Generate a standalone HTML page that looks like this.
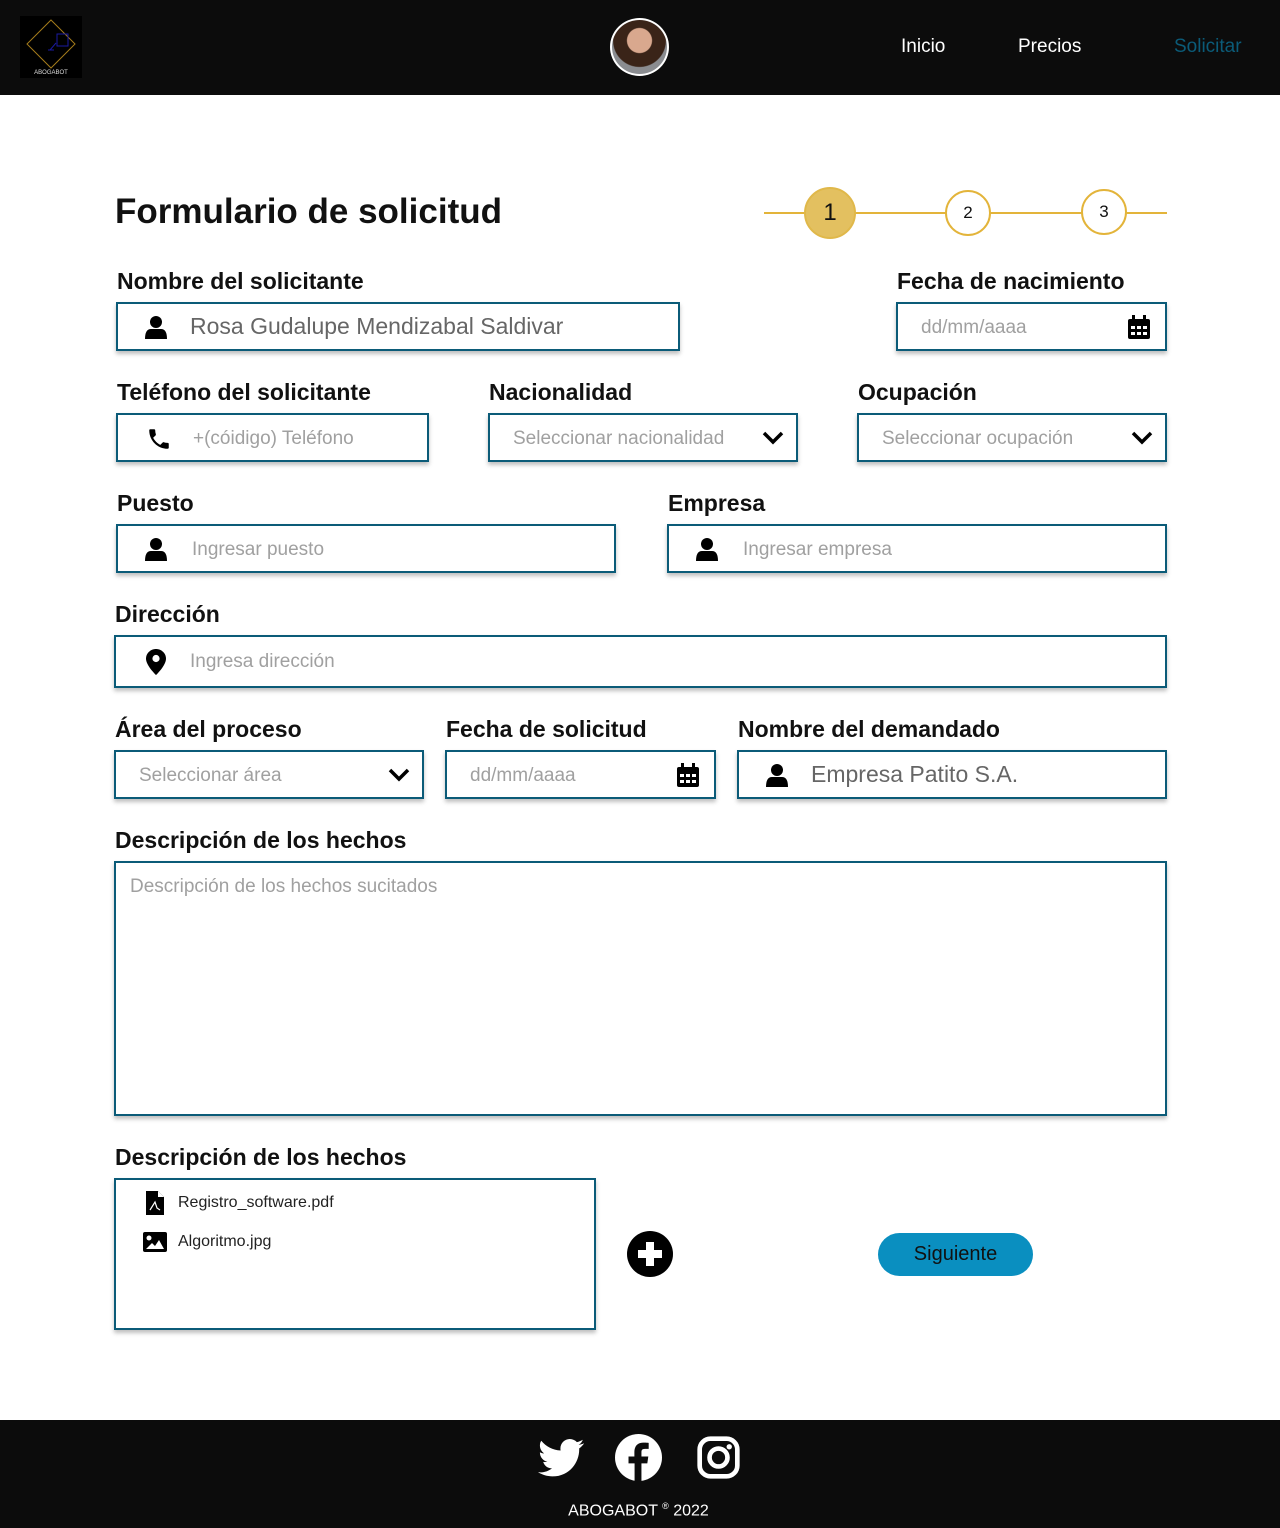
<!DOCTYPE html>
<html><head><meta charset="utf-8"><style>
*{box-sizing:border-box;margin:0;padding:0}
body{width:1280px;height:1528px;position:relative;background:#fff;font-family:"Liberation Sans",sans-serif;overflow:hidden}
.hdr{position:absolute;left:0;top:0;width:1280px;height:95px;background:#0c0c0c}
.ftr{position:absolute;left:0;top:1420px;width:1280px;height:108px;background:#0c0c0c}
.a{position:absolute}
.lbl{position:absolute;font-weight:bold;font-size:23px;color:#111;line-height:26px}
.f{position:absolute;border:2px solid #0b5b78;box-shadow:0 3px 4px rgba(0,0,0,.25);background:#fff}
.ph{position:absolute;font-size:19px;color:#a0a0a0;line-height:24px;white-space:nowrap}
.val{position:absolute;font-size:23px;color:#666;line-height:28px;white-space:nowrap}
.nav{position:absolute;top:36px;font-size:19px;color:#fff}
.st{position:absolute;border-radius:50%;border:2px solid #e3b43a;background:#fff;text-align:center;color:#111}
</style></head><body>
<div class="hdr">
  <div class="a" style="left:20px;top:16px;width:62px;height:62px;background:#000">
    <svg width="62" height="62"><polygon points="31,4 55,28 31,52 7,28" fill="none" stroke="#a57c1b" stroke-width="1"/><rect x="37" y="18" width="11" height="12" fill="none" stroke="#1a1aa0"/><path d="M30 34 L36 27 M28 34 h6" stroke="#1a1aa0" fill="none"/><text x="31" y="58" fill="#ddd" font-size="6" text-anchor="middle" font-family="Liberation Sans">ABOGABOT</text></svg>
  </div>
  <div class="a" style="left:610px;top:18px;width:59px;height:58px;border-radius:50%;border:2px solid #fff;background:radial-gradient(circle at 50% 38%,#d9a88e 0 28%,#3a2418 30% 60%,#8a8c90 62%)"></div>
  <div class="nav" style="left:901px">Inicio</div>
  <div class="nav" style="left:1018px">Precios</div>
  <div class="nav" style="left:1174px;color:#0b5b78">Solicitar</div>
</div>

<div class="a" style="left:115px;top:192px;font-size:35px;font-weight:bold;color:#111">Formulario de solicitud</div>
<div class="a" style="left:764px;top:212px;width:403px;height:2px;background:#e3b43a"></div>
<div class="st" style="left:804px;top:187px;width:52px;height:52px;background:#e3c060;border-color:#e0b84a;font-size:24px;line-height:48px">1</div>
<div class="st" style="left:945px;top:190px;width:46px;height:46px;font-size:17px;line-height:42px">2</div>
<div class="st" style="left:1081px;top:189px;width:46px;height:46px;font-size:17px;line-height:42px">3</div>

<svg width="0" height="0" style="position:absolute"><defs>
<g id="user"><circle cx="12" cy="7" r="6"/><path d="M1 24 Q1 14 7 14 H17 Q23 14 23 24 Z"/></g>
<g id="cal"><rect x="1" y="4" width="22" height="20" rx="2"/><rect x="5" y="0" width="3" height="6"/><rect x="16" y="0" width="3" height="6"/><g fill="#fff"><rect x="4" y="11" width="4" height="3"/><rect x="10" y="11" width="4" height="3"/><rect x="16" y="11" width="4" height="3"/><rect x="4" y="17" width="4" height="3"/><rect x="10" y="17" width="4" height="3"/><rect x="16" y="17" width="4" height="3"/></g></g>
<g id="chev"><path d="M2 4 L11 13 L20 4" fill="none" stroke="#000" stroke-width="3.5"/></g>
</defs></svg>

<div class="lbl" style="left:117px;top:268px">Nombre del solicitante</div>
<div class="f" style="left:116px;top:302px;width:564px;height:49px"><svg class="a" style="left:26px;top:11px" width="24" height="24"><use href="#user"/></svg><div class="val" style="left:72px;top:8px">Rosa Gudalupe Mendizabal Saldivar</div></div>
<div class="lbl" style="left:897px;top:268px">Fecha de nacimiento</div>
<div class="f" style="left:896px;top:302px;width:271px;height:49px"><div class="ph" style="left:23px;top:12px">dd/mm/aaaa</div><svg class="a" style="left:229px;top:11px" width="24" height="24"><use href="#cal"/></svg></div>

<div class="lbl" style="left:117px;top:379px">Teléfono del solicitante</div>
<div class="f" style="left:116px;top:413px;width:313px;height:49px"><svg class="a" style="left:28px;top:11px" width="26" height="26" viewBox="0 0 24 24"><path d="M6.6 10.8c1.4 2.8 3.8 5.1 6.6 6.6l2.2-2.2c.3-.3.7-.4 1-.2 1.1.4 2.3.6 3.6.6.6 0 1 .4 1 1V20c0 .6-.4 1-1 1C10.6 21 3 13.4 3 4c0-.6.4-1 1-1h3.5c.6 0 1 .4 1 1 0 1.3.2 2.5.6 3.6.1.3 0 .7-.2 1z"/></svg><div class="ph" style="left:75px;top:12px">+(cóidigo) Teléfono</div></div>
<div class="lbl" style="left:489px;top:379px">Nacionalidad</div>
<div class="f" style="left:488px;top:413px;width:310px;height:49px"><div class="ph" style="left:23px;top:12px">Seleccionar nacionalidad</div><svg class="a" style="left:272px;top:14px" width="22" height="18"><use href="#chev"/></svg></div>
<div class="lbl" style="left:858px;top:379px">Ocupación</div>
<div class="f" style="left:857px;top:413px;width:310px;height:49px"><div class="ph" style="left:23px;top:12px">Seleccionar ocupación</div><svg class="a" style="left:272px;top:14px" width="22" height="18"><use href="#chev"/></svg></div>

<div class="lbl" style="left:117px;top:490px">Puesto</div>
<div class="f" style="left:116px;top:524px;width:500px;height:49px"><svg class="a" style="left:26px;top:11px" width="24" height="24"><use href="#user"/></svg><div class="ph" style="left:74px;top:12px">Ingresar puesto</div></div>
<div class="lbl" style="left:668px;top:490px">Empresa</div>
<div class="f" style="left:667px;top:524px;width:500px;height:49px"><svg class="a" style="left:26px;top:11px" width="24" height="24"><use href="#user"/></svg><div class="ph" style="left:74px;top:12px">Ingresar empresa</div></div>

<div class="lbl" style="left:115px;top:601px">Dirección</div>
<div class="f" style="left:114px;top:635px;width:1053px;height:53px"><svg class="a" style="left:30px;top:12px" width="20" height="26" viewBox="0 0 20 26"><path d="M10 0C4.5 0 0 4.3 0 9.7 0 16.5 10 26 10 26S20 16.5 20 9.7C20 4.3 15.5 0 10 0z"/><circle cx="10" cy="9.5" r="3.6" fill="#fff"/></svg><div class="ph" style="left:74px;top:13px">Ingresa dirección</div></div>

<div class="lbl" style="left:115px;top:716px">Área del proceso</div>
<div class="f" style="left:114px;top:750px;width:310px;height:49px"><div class="ph" style="left:23px;top:12px">Seleccionar área</div><svg class="a" style="left:272px;top:14px" width="22" height="18"><use href="#chev"/></svg></div>
<div class="lbl" style="left:446px;top:716px">Fecha de solicitud</div>
<div class="f" style="left:445px;top:750px;width:271px;height:49px"><div class="ph" style="left:23px;top:12px">dd/mm/aaaa</div><svg class="a" style="left:229px;top:11px" width="24" height="24"><use href="#cal"/></svg></div>
<div class="lbl" style="left:738px;top:716px">Nombre del demandado</div>
<div class="f" style="left:737px;top:750px;width:430px;height:49px"><svg class="a" style="left:26px;top:11px" width="24" height="24"><use href="#user"/></svg><div class="val" style="left:72px;top:8px">Empresa Patito S.A.</div></div>

<div class="lbl" style="left:115px;top:827px">Descripción de los hechos</div>
<div class="f" style="left:114px;top:861px;width:1053px;height:255px"><div class="ph" style="left:14px;top:12px">Descripción de los hechos sucitados</div></div>

<div class="lbl" style="left:115px;top:1144px">Descripción de los hechos</div>
<div class="f" style="left:114px;top:1178px;width:482px;height:152px">
  <svg class="a" style="left:30px;top:11px" width="18" height="24" viewBox="0 0 18 24"><path d="M0 0H12L18 6V24H0Z"/><path d="M12 0V6H18" fill="#fff"/><path d="M4 19 L9 11 L11 17 L14 19" stroke="#fff" fill="none" stroke-width="1.2"/></svg>
  <div class="a" style="left:62px;top:14px;font-size:16px;color:#222">Registro_software.pdf</div>
  <svg class="a" style="left:27px;top:52px" width="24" height="20" viewBox="0 0 24 20"><rect width="24" height="20" rx="2"/><circle cx="6" cy="6" r="2.5" fill="#fff"/><path d="M3 17 L9 11 L12 14 L16 8 L21 17Z" fill="#fff"/></svg>
  <div class="a" style="left:62px;top:53px;font-size:16px;color:#222">Algoritmo.jpg</div>
</div>
<svg class="a" style="left:627px;top:1231px" width="46" height="46" viewBox="0 0 46 46"><circle cx="23" cy="23" r="23"/><path d="M23 11V35M11 23H35" stroke="#fff" stroke-width="8"/></svg>
<div class="a" style="left:878px;top:1233px;width:155px;height:43px;border-radius:22px;background:#0a8fc0;color:#111;font-size:20px;text-align:center;line-height:43px">Siguiente</div>

<div class="ftr">
  <svg class="a" style="left:538px;top:18px" width="46" height="40" viewBox="0 0 24 20"><path fill="#fff" d="M24 2.4c-.9.4-1.8.6-2.8.8 1-.6 1.8-1.6 2.200-2.7-1 .6-2 1-3.1 1.2C19.3.7 18 .1 16.6.1c-2.7 0-4.9 2.2-4.9 4.9 0 .4 0 .8.1 1.1C7.7 5.9 4.1 4 1.7 1 1.2 1.7 1 2.6 1 3.5c0 1.7.9 3.2 2.2 4.1-.8 0-1.600-.2-2.200-.6v.1c0 2.4 1.7 4.4 3.9 4.8-.4.1-.8.2-1.3.2-.3 0-.6 0-.9-.1.6 2 2.4 3.4 4.6 3.4-1.7 1.3-3.8 2.1-6.1 2.1-.4 0-.8 0-1.2-.1 2.2 1.4 4.8 2.2 7.5 2.2 9.1 0 14-7.5 14-14v-.6c1-.7 1.8-1.6 2.5-2.5z"/></svg>
  <svg class="a" style="left:615px;top:14px" width="47" height="47" viewBox="0 0 24 24"><circle cx="12" cy="12" r="12" fill="#fff"/><path fill="#0c0c0c" d="M13.5 24V15h3l.5-3.5h-3.5V9.3c0-1 .3-1.7 1.8-1.7h1.9V4.5c-.3 0-1.5-.1-2.8-.1-2.7 0-4.5 1.7-4.5 4.7v2.4H6.9V15H10v9z"/></svg>
  <svg class="a" style="left:697px;top:16px" width="43" height="43" viewBox="0 0 24 24"><rect x="1.5" y="1.5" width="21" height="21" rx="6" fill="none" stroke="#fff" stroke-width="2.6"/><circle cx="12" cy="12" r="5" fill="none" stroke="#fff" stroke-width="2.6"/><circle cx="18" cy="6" r="1.5" fill="#fff"/></svg>
  <div class="a" style="left:0;top:81px;width:1277px;text-align:center;color:#fff;font-size:16px">ABOGABOT <sup style="font-size:9px">®</sup> 2022</div>
</div>
</body></html>
